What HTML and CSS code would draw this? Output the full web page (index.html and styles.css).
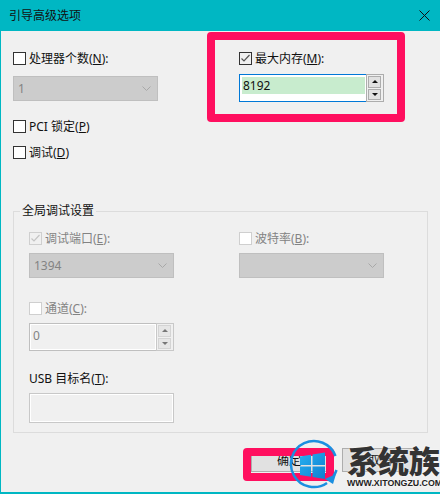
FILE: index.html
```html
<!DOCTYPE html>
<html lang="zh-CN">
<head>
  <meta charset="UTF-8" />
  <title>引导高级选项</title>
  <link rel="stylesheet" href="styles.css">
</head>
<body>
  <main class="dialog">
    <header class="titlebar">
      <span class="title">引导高级选项</span>
      <svg class="close" width="11" height="11" viewBox="0 0 11 11"><path d="M.5.5l10 10M10.5.5l-10 10" stroke="#111" stroke-width="1" fill="none"/></svg>
    </header>

    <section class="top">
      <div class="col">
        <label class="check"><input type="checkbox" /><span>处理器个数(<u>N</u>):</span></label>
        <select class="select" disabled><option>1</option></select>
        <label class="check pci"><input type="checkbox" /><span>PCI 锁定(<u>P</u>)</span></label>
        <label class="check debug"><input type="checkbox" /><span>调试(<u>D</u>)</span></label>
      </div>
      <div class="col">
        <label class="check"><input type="checkbox" checked /><span>最大内存(<u>M</u>):</span></label>
        <div class="spin spin-active">
          <div class="spin-value"><span class="selected">8192</span></div>
          <div class="spin-btns">
            <span class="spin-btn"><i class="arrow up"></i></span>
            <span class="spin-btn"><i class="arrow down"></i></span>
          </div>
        </div>
      </div>
    </section>

    <fieldset class="group">
      <legend>全局调试设置</legend>
      <div class="group-grid">
        <div class="col off">
          <label class="check"><input type="checkbox" checked disabled /><span>调试端口(<u>E</u>):</span></label>
          <select class="select" disabled><option>1394</option></select>
        </div>
        <div class="col off">
          <label class="check"><input type="checkbox" disabled /><span>波特率(<u>B</u>):</span></label>
          <select class="select" disabled><option></option></select>
        </div>
        <div class="col off channel">
          <label class="check"><input type="checkbox" disabled /><span>通道(<u>C</u>):</span></label>
          <div class="spin spin-off">
            <div class="spin-value">0</div>
            <div class="spin-btns">
              <span class="spin-btn"><i class="arrow up"></i></span>
              <span class="spin-btn"><i class="arrow down"></i></span>
            </div>
          </div>
        </div>
      </div>
      <div class="usb">
        <label class="usb-label">USB 目标名(<u>T</u>):</label>
        <div class="usb-input"></div>
      </div>
    </fieldset>

    <footer class="actions">
      <button class="btn ok" type="button">确定</button>
      <button class="btn cancel" type="button">取消</button>
    </footer>

    <div class="mark mark-memory"></div>
    <div class="mark mark-ok"></div>

    <div class="watermark">
      <svg class="wm-logo" width="50" height="54" viewBox="0 0 50 54">
        <defs>
          <linearGradient id="tile" x1="0" y1="0" x2="1" y2="1">
            <stop offset="0" stop-color="#27b0f0"/>
            <stop offset="1" stop-color="#0f7fd0"/>
          </linearGradient>
        </defs>
        <path d="M38 44A23 23 0 1 1 46.500 17" fill="none" stroke="#1b8fe0" stroke-width="2.500"/>
        <path d="M47.500 31a23 23 0 0 1-3 6" fill="none" stroke="#1b8fe0" stroke-width="2.500"/>
        <path d="M47 35l-3 10-8-5z" fill="#1b8fe0"/>
        <path d="M11 17.500l11-1.700v10.200H11zM23.500 15.500L36 13.500V26H23.500zM11 27.500h11v10.200l-11-1.700zM23.500 27.500H36V40l-12.500-2z" fill="url(#tile)"/>
      </svg>
      <div class="wm-text">
        <div class="wm-name">系统族</div>
        <div class="wm-url">WWW.XITONGZU.COM</div>
      </div>
    </div>
  </main>
</body>
</html>
```

FILE: styles.css
```css
:root {
  --teal: #00b7c3;
  --bg: #f0f0f0;
  --mark: #ff0f5f;
  --disabled-fill: #cccccc;
  --disabled-line: #bfbfbf;
  --disabled-text: #838383;
}

* {
  box-sizing: border-box;
}

body {
  margin: 0;
  background: var(--bg);
  font-family: "Noto Sans", "Noto Sans CJK SC", sans-serif;
  font-size: 12px;
  color: #111;
}

.dialog {
  position: relative;
  width: 440px;
  height: 494px;
  overflow: hidden;
  background: var(--bg);
  border-left: 1px solid var(--teal);
  border-bottom: 2px solid var(--teal);
}

.titlebar {
  height: 31px;
  margin-left: -1px;
  padding: 0 10px 0 9px;
  display: flex;
  align-items: center;
  justify-content: space-between;
  background: var(--teal);
}

.title {
  font-size: 12px;
  line-height: 16px;
}

.top {
  display: grid;
  grid-template-columns: 226px 190px;
  padding: 21px 0 0 12px;
  height: 172px;
}

.col {
  display: flex;
  flex-direction: column;
  align-items: flex-start;
}

.check {
  display: flex;
  align-items: center;
  gap: 3px;
  height: 13px;
  line-height: 13px;
  white-space: pre;
}

.check input {
  appearance: none;
  width: 13px;
  height: 13px;
  margin: 0;
  background: #fff no-repeat center;
  border: 1px solid #333;
  border-radius: 0;
}

.check input:checked {
  background-color: var(--bg);
  background-image: url("data:image/svg+xml,%3Csvg xmlns='http://www.w3.org/2000/svg' width='11' height='11'%3E%3Cpath d='M1.500 5.500l2.500 2.500 5.500-6' stroke='%23555' stroke-width='1.200' fill='none'/%3E%3C/svg%3E");
}

.pci {
  margin-top: 19px;
}

.debug {
  margin-top: 13px;
}

.select {
  appearance: none;
  display: block;
  width: 145px;
  height: 25px;
  margin-top: 11px;
  padding: 0 4px;
  border: 1px solid var(--disabled-line);
  border-radius: 0;
  font: inherit;
  color: var(--disabled-text);
  opacity: 1;
  background: var(--disabled-fill) url("data:image/svg+xml,%3Csvg xmlns='http://www.w3.org/2000/svg' width='9' height='6'%3E%3Cpath d='M.5.5l4 4 4-4' stroke='%23a8a8a8' fill='none'/%3E%3C/svg%3E") no-repeat right 6px center;
}

.off .select {
  margin-top: 8px;
}

.spin {
  display: flex;
  width: 145px;
  height: 28px;
  margin-top: 9px;
}

.spin-value {
  flex: 1;
  padding: 2px 1px 0 2px;
  line-height: 17px;
  background: #fff;
  border: 1px solid #0078d7;
  border-right: none;
}

.selected {
  display: block;
  height: 17px;
  padding-left: 1px;
  background: #c8ecce;
}

.spin-btns {
  width: 18px;
  display: flex;
  flex-direction: column;
  gap: 1px;
  padding: 1px 2px 1px 1px;
  border: 1px solid #adadad;
}

.spin-btn {
  flex: 1;
  display: flex;
  align-items: center;
  justify-content: center;
  background: #e1e1e1;
  border: 1px solid #adadad;
}

.arrow {
  width: 0;
  height: 0;
  border-left: 3px solid transparent;
  border-right: 3px solid transparent;
}

.arrow.up {
  border-bottom: 3px solid #111;
}

.arrow.down {
  border-top: 3px solid #111;
}

.group {
  width: 415px;
  height: 230px;
  margin: 0 0 0 12px;
  padding: 0 0 0 15px;
  min-width: 0;
  border: 1px solid #dcdcdc;
}

.group legend {
  margin-left: -9px;
  padding: 0 2px;
  line-height: 16px;
}

.group-grid {
  display: grid;
  grid-template-columns: 210px 145px;
  padding-top: 13px;
}

.off {
  color: var(--disabled-text);
}

.off .check input {
  border-color: #cfcfcf;
}

.off .check input:checked {
  background-color: var(--bg);
  background-image: url("data:image/svg+xml,%3Csvg xmlns='http://www.w3.org/2000/svg' width='11' height='11'%3E%3Cpath d='M1.500 5.500l2.500 2.500 5.500-6' stroke='%23c4c4c4' stroke-width='1.200' fill='none'/%3E%3C/svg%3E");
}

.channel {
  margin-top: 24px;
}

.channel .spin {
  margin-top: 8px;
}

.spin-off .spin-value {
  padding: 2px 0 0 3px;
  line-height: 20px;
  background: var(--bg);
  border: 1px solid var(--disabled-line);
  border-right: none;
  box-shadow: inset 0 0 0 1px #fff;
}

.spin-off .spin-btns {
  border-color: #c8c8c8;
}

.spin-off .spin-btn {
  background: #e6e6e6;
  border-color: #d4d4d4;
}

.spin-off .arrow.up {
  border-bottom-color: #777;
}

.spin-off .arrow.down {
  border-top-color: #777;
}

.usb {
  margin-top: 20px;
}

.usb-label {
  display: block;
  line-height: 16px;
}

.usb-input {
  width: 145px;
  height: 30px;
  margin-top: 6px;
  border: 1px solid #c8c8c8;
  box-shadow: inset 0 0 0 1px #fff;
}

.actions {
  display: flex;
  gap: 15px;
  padding: 15px 0 0 250px;
}

.btn {
  width: 76px;
  height: 24px;
  padding: 0;
  font: inherit;
  color: #111;
  background: #e1e1e1;
  border: 1px solid #adadad;
}

.mark {
  position: absolute;
  border: 8px solid var(--mark);
  border-radius: 4px;
}

.mark-memory {
  left: 206px;
  top: 32px;
  width: 198px;
  height: 90px;
}

.mark-ok {
  left: 242px;
  top: 448px;
  width: 91px;
  height: 33px;
}

.watermark {
  position: absolute;
  left: 288px;
  top: 439px;
  display: flex;
  gap: 8px;
}

.wm-text {
  width: 94px;
  padding-top: 4px;
  white-space: nowrap;
  text-shadow: 0 0 2px #fff;
}

.wm-name {
  font-family: "Noto Sans CJK SC", sans-serif;
  font-weight: 900;
  font-size: 31px;
  line-height: 34px;
  color: #333;
}

.wm-url {
  font-family: "Liberation Sans", sans-serif;
  font-weight: 700;
  font-size: 8.800px;
  line-height: 10px;
  margin-top: 1px;
  color: #222;
}
```
